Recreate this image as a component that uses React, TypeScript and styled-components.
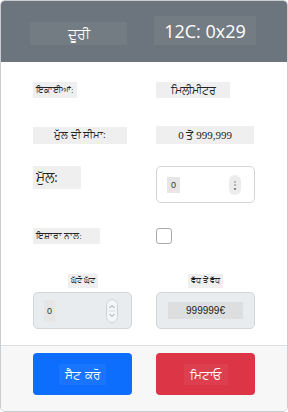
import React from "react";
import styled, { createGlobalStyle } from "styled-components";

const Global = createGlobalStyle`
  html, body { margin: 0; padding: 0; background: #fff; }
  body { font-family: "Open Sans", "Noto Sans", sans-serif; }
  * { box-sizing: border-box; }
`;

const Card = styled.div`
  width: 288px;
  height: 412px;
  border: 1px solid #c9ccd0;
  border-radius: 5px;
  overflow: hidden;
  display: flex;
  flex-direction: column;
  background: #fff;
`;

const Header = styled.div`
  height: 61px;
  background: #6c757d;
  display: grid;
  grid-template-columns: 97px 102px;
  justify-content: space-between;
  align-items: end;
  padding: 0 31px 17px 29px;
`;

const HeadBox = styled.div<{ $h: number; $size: number }>`
  height: ${(p) => p.$h}px;
  background: rgba(255, 255, 255, 0.05);
  color: #fff;
  font-size: ${(p) => p.$size}px;
  display: flex;
  align-items: center;
  justify-content: center;
  line-height: 1;
`;

const Body = styled.div`
  flex: 1;
  padding: 18px 32px 0 32px;
  display: flex;
  flex-direction: column;
`;

const Row = styled.div<{ $mt: number; $h: number; $align?: string }>`
  margin-top: ${(p) => p.$mt}px;
  height: ${(p) => p.$h}px;
  display: grid;
  grid-template-columns: 99px 99px;
  column-gap: 24px;
  align-items: ${(p) => p.$align || "center"};
`;

const Tag = styled.span<{ $size?: number; $w?: number; $h?: number; $center?: boolean }>`
  display: inline-flex;
  align-items: center;
  justify-content: ${(p) => (p.$center ? "center" : "flex-start")};
  width: ${(p) => (p.$w ? `${p.$w}px` : "auto")};
  height: ${(p) => p.$h || 16}px;
  padding: 0 3px;
  background: #efefef;
  color: #222;
  font-size: ${(p) => p.$size || 9}px;
  font-family: "Liberation Serif", "Noto Sans", serif;
  justify-self: start;
`;

const NumberBox = styled.div<{ $disabled?: boolean }>`
  height: 37px;
  align-self: stretch;
  border: 1px solid #d3d6d9;
  border-radius: 5px;
  background: ${(p) => (p.$disabled ? "#e9ecef" : "#fff")};
  display: flex;
  align-items: center;
  justify-content: space-between;
  padding: 0 13px 0 10px;
`;

const Zero = styled.span<{ $tall?: boolean }>`
  display: inline-flex;
  align-items: center;
  justify-content: center;
  width: ${(p) => (p.$tall ? 11 : 13)}px;
  height: ${(p) => (p.$tall ? 22 : 16)}px;
  background: #e6e6e6;
  font-size: 9px;
  color: #333;
  font-family: "Liberation Sans", sans-serif;
`;

const Spin = styled.span<{ $outlined?: boolean }>`
  width: 12px;
  height: ${(p) => (p.$outlined ? 24 : 20)}px;
  border-radius: 6px;
  background: ${(p) => (p.$outlined ? "#f4f5f6" : "#ececec")};
  border: ${(p) => (p.$outlined ? "1px solid #d0d3d6" : "none")};
  display: flex;
  flex-direction: column;
  align-items: center;
  justify-content: center;
`;

const Check = styled.span`
  width: 16px;
  height: 16px;
  border: 1px solid #a9a9a9;
  border-radius: 3px;
  background: #fff;
  justify-self: start;
`;

const Col = styled.div`
  display: flex;
  flex-direction: column;
  align-items: center;
  gap: 4px;
`;

const MaxBox = styled.div`
  height: 37px;
  align-self: stretch;
  border: 1px solid #d3d6d9;
  border-radius: 5px;
  background: #e9ecef;
  display: flex;
  align-items: center;
  justify-content: center;
`;

const MaxInner = styled.span`
  width: 75px;
  height: 17px;
  background: #dcdee0;
  display: flex;
  align-items: center;
  justify-content: center;
  font-size: 10px;
  color: #222;
  font-family: "Liberation Sans", sans-serif;
`;

const Footer = styled.div`
  height: 66px;
  border-top: 1px solid #dcdfe2;
  background: #f7f7f8;
  display: grid;
  grid-template-columns: 99px 99px;
  column-gap: 24px;
  padding: 7px 32px 0 32px;
  align-items: start;
`;

const Btn = styled.button<{ $bg: string }>`
  height: 42px;
  border: none;
  border-radius: 4px;
  background: ${(p) => p.$bg};
  color: #fff;
  font-size: 12px;
  font-family: "Noto Sans", sans-serif;
  display: flex;
  align-items: center;
  justify-content: center;
  padding: 0;
`;

const BtnText = styled.span`
  background: rgba(255, 255, 255, 0.05);
  padding: 2px 6px;
`;

const Arrows = ({ both }: { both?: boolean }) =>
  both ? (
    <svg width="8" height="18" viewBox="0 0 8 18">
      <path d="M1.5 6 L4 3.5 L6.5 6" fill="none" stroke="#8a9096" strokeWidth="0.9" />
      <path d="M1.5 12 L4 14.5 L6.5 12" fill="none" stroke="#8a9096" strokeWidth="0.9" />
      <line x1="0.5" y1="9" x2="7.5" y2="9" stroke="#d6d9dc" strokeWidth="0.7" />
    </svg>
  ) : (
    <svg width="8" height="16" viewBox="0 0 8 16">
      <circle cx="4" cy="5" r="0.7" fill="#555" />
      <circle cx="4" cy="8" r="0.7" fill="#555" />
      <path d="M2.5 11.5 L5.5 11.5 L4 13 Z" fill="#333" />
    </svg>
  );

export default function App() {
  return (
    <>
      <Global />
      <Card>
        <Header>
          <HeadBox $h={23} $size={14}>ਦੂਰੀ</HeadBox>
          <HeadBox $h={29} $size={18}>12C: 0x29</HeadBox>
        </Header>
        <Body>
          <Row $mt={0} $h={20}>
            <Tag>ਇਕਾਈਆਂ:</Tag>
            <Tag $w={74} $h={16} $size={11} $center>ਮਿਲੀਮੀਟਰ</Tag>
          </Row>
          <Row $mt={25} $h={20}>
            <Tag $w={94} $h={17} $size={10} $center>ਮੁੱਲ ਦੀ ਸੀਮਾ:</Tag>
            <Tag $w={98} $h={18} $size={11} $center>0 ਤੋਂ 999,999</Tag>
          </Row>
          <Row $mt={21} $h={37} $align="start">
            <Tag $w={48} $h={23} $size={14}>ਮੁੱਲ:</Tag>
            <NumberBox>
              <Zero>0</Zero>
              <Spin><Arrows /></Spin>
            </NumberBox>
          </Row>
          <Row $mt={25} $h={16}>
            <Tag $w={67} $h={16} $size={9}>ਇਸ਼ਾਰਾ ਨਾਲ:</Tag>
            <Check />
          </Row>
          <Row $mt={30} $h={56} $align="start">
            <Col>
              <Tag $h={14} $size={8}>ਘੱਟੋ ਘੱਟ</Tag>
              <NumberBox $disabled>
                <Zero $tall>0</Zero>
                <Spin $outlined><Arrows both /></Spin>
              </NumberBox>
            </Col>
            <Col>
              <Tag $h={14} $size={8}>ਵੱਧ ਤੋਂ ਵੱਧ</Tag>
              <MaxBox>
                <MaxInner>999999€</MaxInner>
              </MaxBox>
            </Col>
          </Row>
        </Body>
        <Footer>
          <Btn $bg="#0d6efd"><BtnText>ਸੈੱਟ ਕਰੋ</BtnText></Btn>
          <Btn $bg="#dc3545"><BtnText>ਮਿਟਾਓ</BtnText></Btn>
        </Footer>
      </Card>
    </>
  );
}
